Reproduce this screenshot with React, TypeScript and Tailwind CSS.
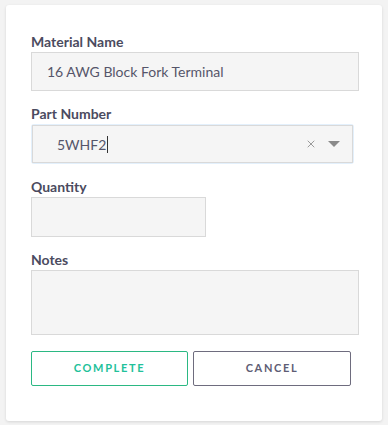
import { X } from 'lucide-react';

export default function App() {
  return (
    <div className="min-h-[425px] w-[388px] bg-[#f3f3f3] px-[6px] pt-[5px] font-['Lato','Open_Sans',sans-serif]">
      <div className="h-[416px] rounded-[3px] bg-white px-[25px] pt-[28px] shadow-[0_1px_3px_rgba(0,0,0,0.12)]">
        <label className="block text-[14px] font-bold leading-[18px] text-[#4b4b60]">Material Name</label>
        <div className="mt-[1px] flex h-[39px] w-[328px] items-center border border-[#d9d9d9] bg-[#f5f5f5] pl-[15px] text-[14px] text-[#55556a]">
          16 AWG Block Fork Terminal
        </div>

        <label className="mt-[14px] block text-[14px] font-bold leading-[18px] text-[#4b4b60]">Part Number</label>
        <div className="mt-[1px] w-[323px] rounded-[3px] bg-[#e3f0fc] p-[1px]">
          <div className="flex h-[38px] items-center border border-[#d9d9d9] bg-[#f5f5f5] pl-[24px] pr-[12px] text-[14px] text-[#55556a]">
            <span>5WHF2</span>
            <span className="ml-[1px] h-[17px] w-px bg-[#333]" />
            <div className="flex-1" />
            <X className="h-[12px] w-[12px] text-[#9a9a9a]" strokeWidth={2} />
            <svg width="12" height="7" viewBox="0 0 12 7" className="ml-[11px]">
              <path d="M0 0 L12 0 L6 6 Z" fill="#8a8a8a" />
            </svg>
          </div>
        </div>

        <label className="mt-[14px] block text-[14px] font-bold leading-[18px] text-[#4b4b60]">Quantity</label>
        <div className="mt-[1px] h-[40px] w-[175px] border border-[#d9d9d9] bg-[#f5f5f5]" />

        <label className="mt-[14px] block text-[14px] font-bold leading-[18px] text-[#4b4b60]">Notes</label>
        <div className="mt-[1px] h-[65px] w-[328px] border border-[#d9d9d9] bg-[#f5f5f5]" />

        <div className="mt-[16px] flex gap-[5px]">
          <button className="h-[35px] w-[157px] rounded-[2px] border border-[#2bb883] text-[11px] font-bold tracking-[0.15em] text-[#22c19a]">
            COMPLETE
          </button>
          <button className="h-[35px] w-[158px] rounded-[2px] border border-[#6e6c7e] text-[11px] font-bold tracking-[0.15em] text-[#5e5d74]">
            CANCEL
          </button>
        </div>
      </div>
    </div>
  );
}
